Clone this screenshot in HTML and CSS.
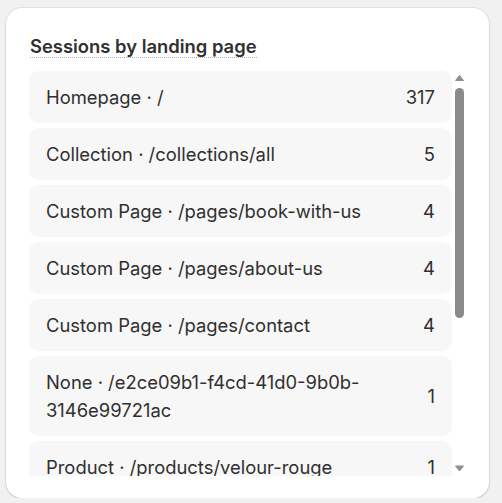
FILE: index.html
```html
<!DOCTYPE html>
<html>
<head>
<meta charset="utf-8">
<link rel="stylesheet" href="styles.css">
</head>
<body>
<div class="card">
  <div class="title-wrap"><h2 class="title">Sessions by landing page</h2></div>
  <div class="scroller">
    <div class="list">
      <div class="row"><span class="label">Homepage · /</span><span class="value">317</span></div>
      <div class="row"><span class="label">Collection · /collections/all</span><span class="value">5</span></div>
      <div class="row"><span class="label">Custom Page · /pages/book-with-us</span><span class="value">4</span></div>
      <div class="row"><span class="label">Custom Page · /pages/about-us</span><span class="value">4</span></div>
      <div class="row"><span class="label">Custom Page · /pages/contact</span><span class="value">4</span></div>
      <div class="row"><span class="label">None · /e2ce09b1-f4cd-41d0-9b0b-3146e99721ac</span><span class="value">1</span></div>
      <div class="row"><span class="label">Product · /products/velour-rouge</span><span class="value">1</span></div>
      <div class="row"><span class="label">Product · /products/linen-blanc</span><span class="value">1</span></div>
      <div class="row"><span class="label">Product · /products/silk-noir</span><span class="value">1</span></div>
      <div class="row"><span class="label">Custom Page · /pages/faq</span><span class="value">1</span></div>
      <div class="row"><span class="label">Blog · /blogs/news</span><span class="value">1</span></div>
    </div>
    <div class="scrollbar">
      <svg class="arrow" width="15" height="15" viewBox="0 0 15 15"><polygon points="7.5,4.5 11.5,9.5 3.5,9.5" fill="#8f8f8f" stroke="#8f8f8f" stroke-width="1" stroke-linejoin="round"/></svg>
      <div class="track"><div class="thumb"></div></div>
      <svg class="arrow" width="15" height="15" viewBox="0 0 15 15"><polygon points="3.5,5 11.5,5 7.5,10" fill="#8f8f8f" stroke="#8f8f8f" stroke-width="1" stroke-linejoin="round"/></svg>
    </div>
  </div>
</div>
</body>
</html>
```

FILE: styles.css
```css
html, body {
  margin: 0;
  padding: 0;
}
body {
  background: #f1f1f1;
  font-family: Inter, "Noto Sans", sans-serif;
  color: #303030;
  padding: 8px 0 0 6px;
}
.card {
  box-sizing: border-box;
  width: 483px;
  height: 490px;
  background: #ffffff;
  border-radius: 16px;
  box-shadow: 0 0 0 1px rgba(0, 0, 0, 0.06), 0 1px 2px rgba(0, 0, 0, 0.14);
  padding: 27px 22px 22px 23px;
}
.title-wrap {
  margin-bottom: 13px;
  line-height: 22px;
}
.title {
  display: inline-block;
  margin: 0 0 0 1px;
  font-size: 18.4px;
  font-weight: 600;
  line-height: 22px;
  color: #303030;
  border-bottom: 1px dotted #b0b0b0;
}
.scroller {
  display: flex;
  height: 405px;
}
.list {
  flex: 1;
  min-width: 0;
  overflow: hidden;
  display: flex;
  flex-direction: column;
  gap: 5px;
}
.scrollbar {
  width: 15px;
  flex-shrink: 0;
  display: flex;
  flex-direction: column;
}
.arrow {
  display: block;
  flex-shrink: 0;
}
.track {
  flex: 1;
  padding-top: 2px;
}
.thumb {
  width: 9px;
  height: 230px;
  margin-left: 2.5px;
  border-radius: 5px;
  background: #8a8a8a;
}
.row {
  flex-shrink: 0;
  display: flex;
  justify-content: space-between;
  align-items: center;
  gap: 16px;
  background: #f7f7f7;
  border-radius: 10px;
  padding: 12px 17px 12px 17px;
  font-size: 18.4px;
  line-height: 28px;
}
.value {
  flex-shrink: 0;
}
```
